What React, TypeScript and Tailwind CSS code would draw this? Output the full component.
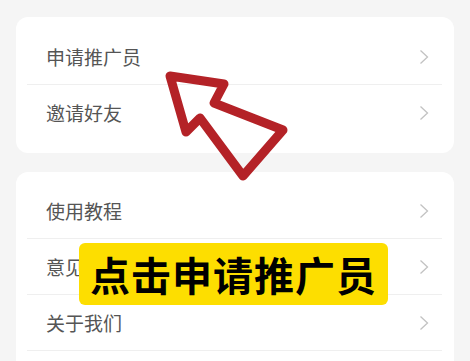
const font = { fontFamily: '"Noto Sans CJK SC", "Noto Sans", sans-serif' };

function Chevron() {
  return (
    <svg width="10" height="16" viewBox="0 0 10 16" className="text-[#c2c2c2]">
      <polyline points="1.5,1.5 8.5,8 1.5,14.5" fill="none" stroke="currentColor" strokeWidth="1.3" />
    </svg>
  );
}

function Row({ label, last }: { label: string; last?: boolean }) {
  return (
    <div className="relative h-14 flex items-center justify-between pl-[30px] pr-[25px]">
      <span className="text-[19px] text-[#555555] leading-none -mt-[2px]">{label}</span>
      <Chevron />
      {!last && <div className="absolute bottom-0 left-[11px] right-[12px] h-px bg-[#efefef]" />}
    </div>
  );
}

export default function App() {
  return (
    <div className="relative w-[470px] h-[361px] overflow-hidden bg-[#f5f5f5]" style={font}>
      <div className="px-4 pt-[17px] flex flex-col gap-[19px]">
        <div className="bg-white rounded-[12px] py-3">
          <Row label="申请推广员" />
          <Row label="邀请好友" last />
        </div>
        <div className="bg-white rounded-[12px] pt-[11px] pb-10">
          <Row label="使用教程" />
          <Row label="意见反馈" />
          <Row label="关于我们" />
        </div>
      </div>

      <svg className="absolute inset-0 pointer-events-none" width="470" height="361" viewBox="0 0 470 361">
        <path
          d="M170 76 L224 84 L214 103 L283 130 L243 176 L200 118 L186 132 Z"
          fill="none"
          stroke="#b42227"
          strokeWidth="9"
          strokeLinejoin="round"
        />
      </svg>

      <div className="absolute left-[79px] top-[243px] w-[309px] h-[62px] rounded-[6px] bg-[#fdde00] flex items-center justify-center">
        <span className="text-[40px] font-bold text-black leading-none tracking-[1px]">点击申请推广员</span>
      </div>
    </div>
  );
}
